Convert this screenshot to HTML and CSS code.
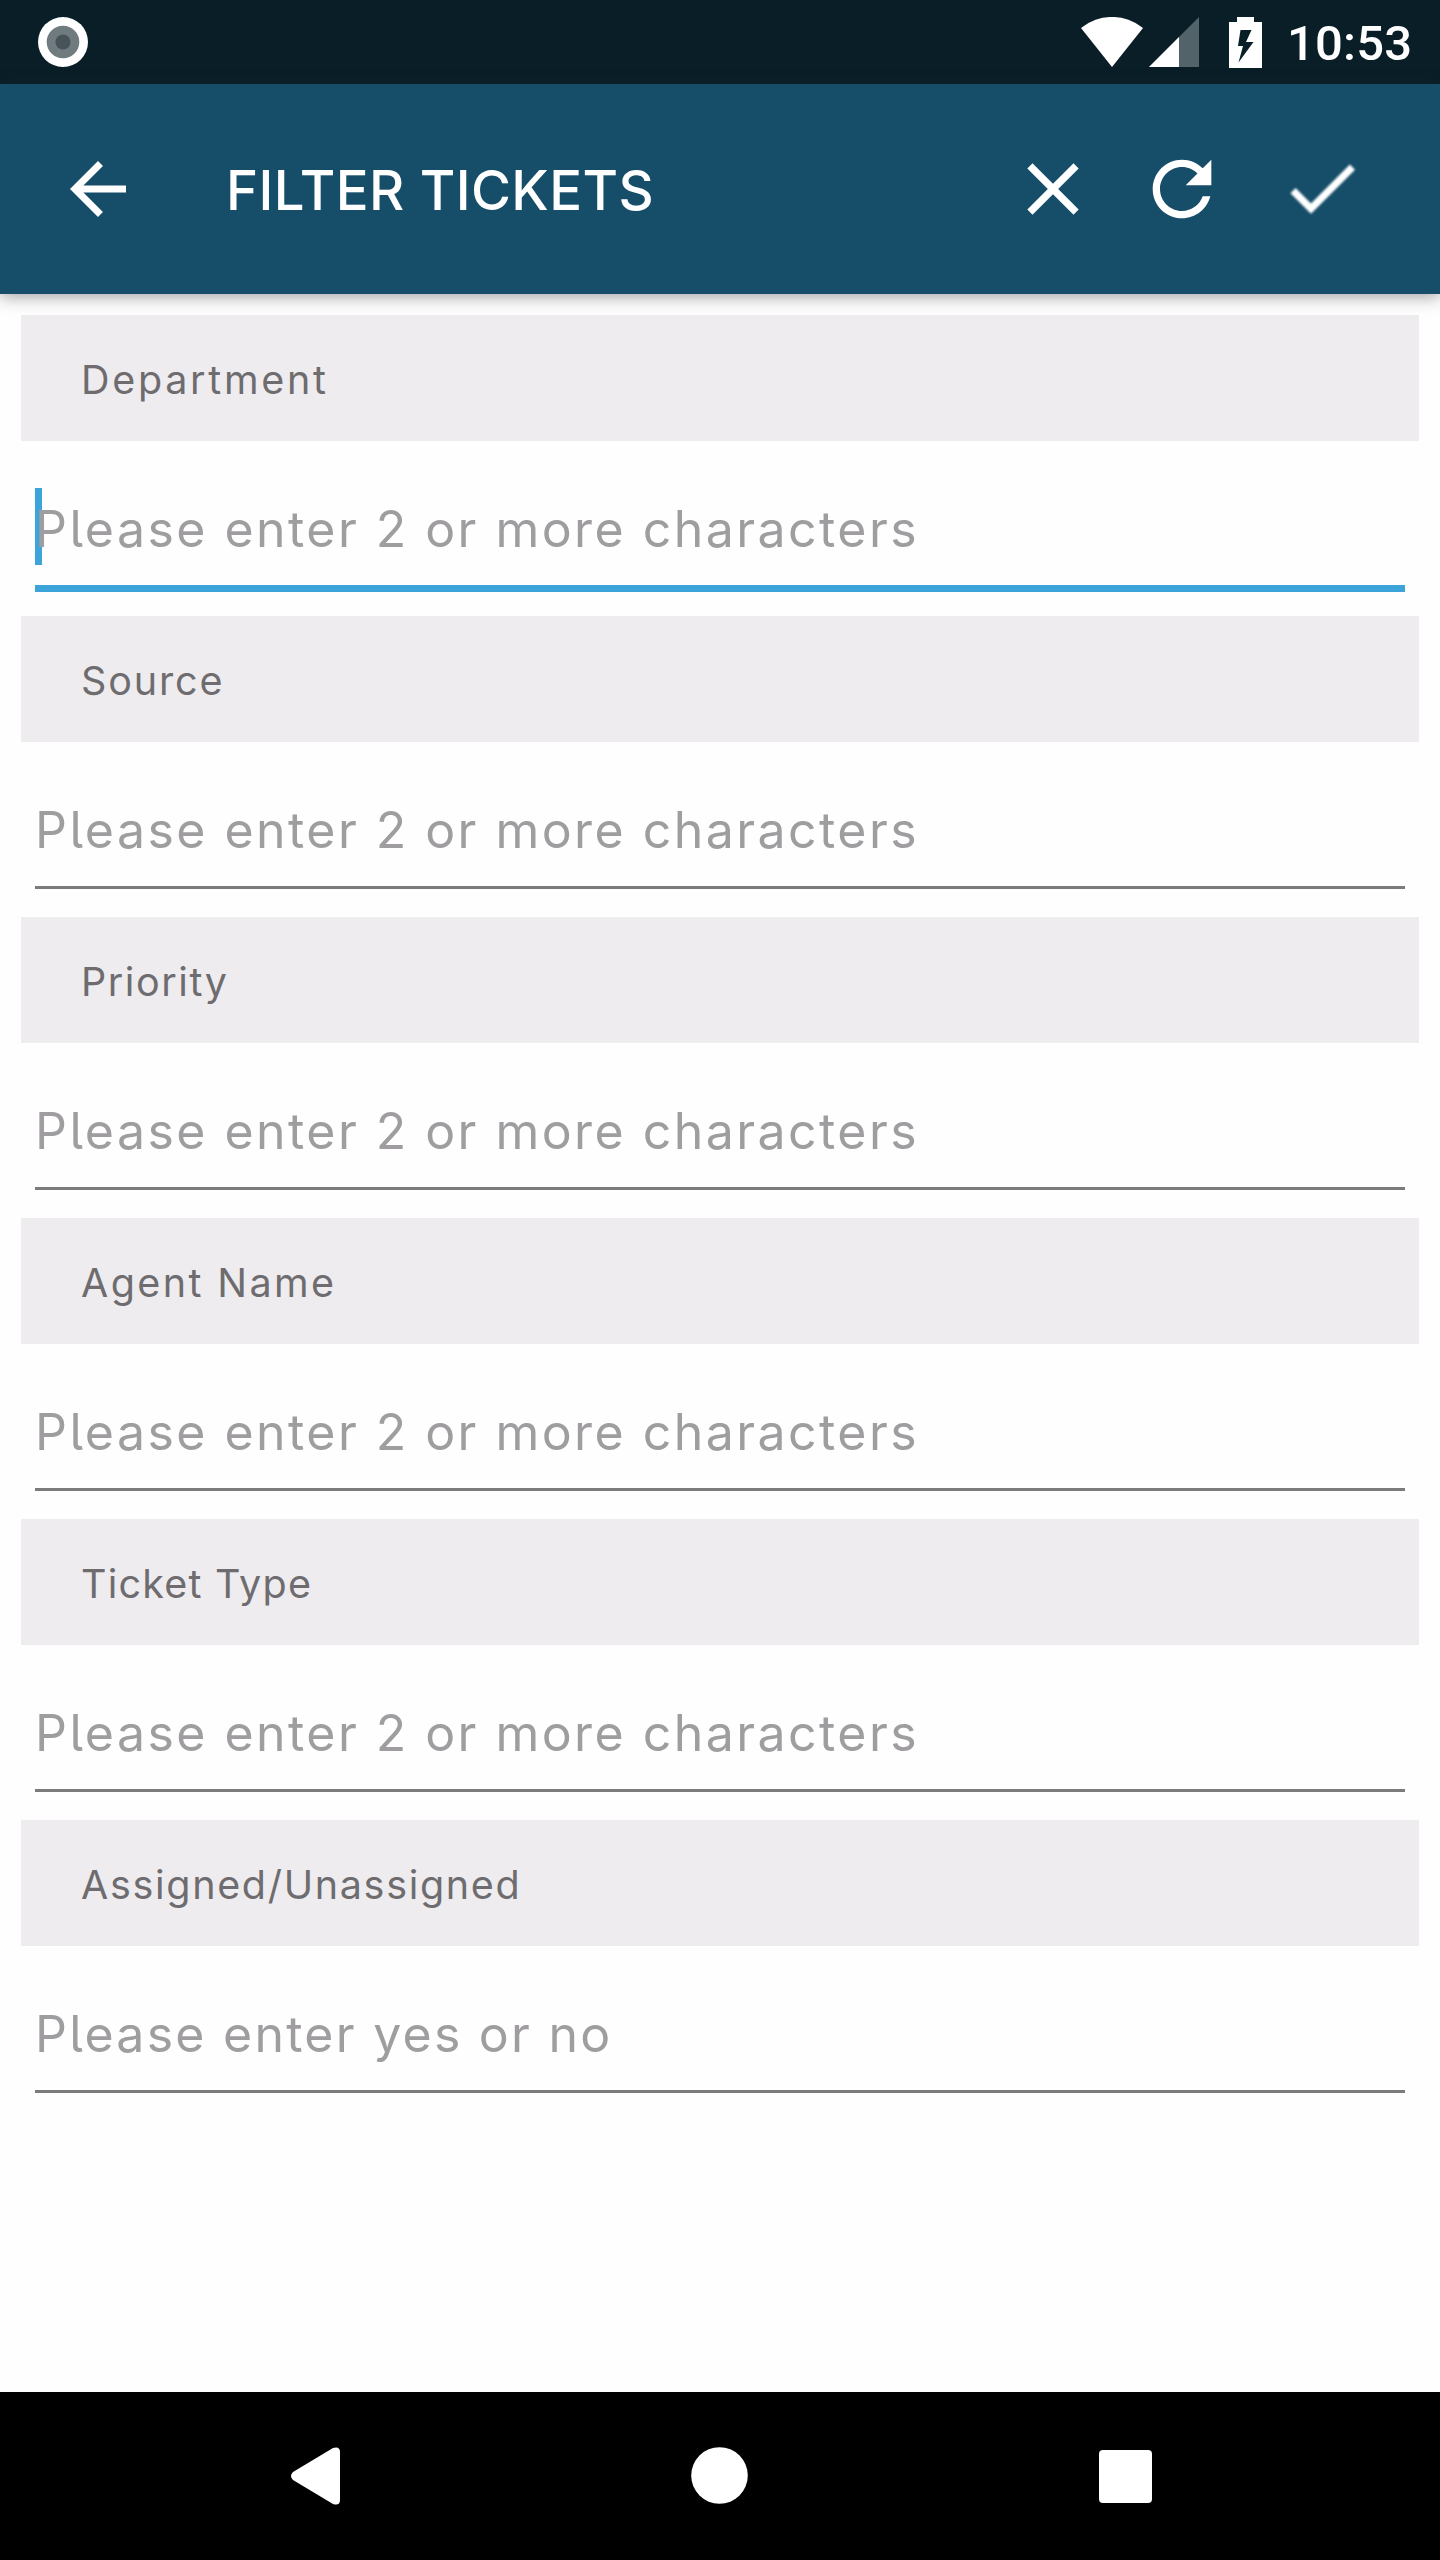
FILE: index.html
```html
<!DOCTYPE html>
<html lang="en">
<head>
<meta charset="utf-8">
<title>Filter Tickets</title>
<link rel="stylesheet" href="styles.css">
</head>
<body>
<div class="screen">
  <header class="status">
    <svg class="record" width="50" height="50" viewBox="0 0 50 50"><circle cx="25" cy="25" r="25" fill="#fff"/><circle cx="25" cy="25" r="16.3" fill="#6f7b7f"/><circle cx="25" cy="25" r="7.6" fill="#46545a"/></svg>
    <div class="status-right">
      <svg class="wifi" width="62" height="50" viewBox="0 0 62 50"><path d="M0 11A49 49 0 0 1 62 11L31 50Z" fill="#fff"/></svg>
      <svg class="signal" width="50" height="50" viewBox="0 0 50 50"><path d="M0 50L50 0V50Z" fill="#53636a"/><path d="M0 50L30 20V50Z" fill="#fff"/></svg>
      <svg class="battery" width="33" height="51" viewBox="0 0 33 51"><path fill-rule="evenodd" d="M8 0H25V5H33V51H0V5H8ZM11.5 13L9 29H14L9.5 45.500L24.500 25H17L22.500 13Z" fill="#fff"/></svg>
      <span class="clock">10:53</span>
    </div>
  </header>
  <div class="toolbar">
    <svg class="back" width="84" height="84" viewBox="0 0 24 24"><path d="M20 11H7.830l5.590-5.590L12 4l-8 8 8 8 1.410-1.410L7.830 13H20v-2z"/></svg>
    <h1 class="title">FILTER TICKETS</h1>
    <svg class="close" width="88" height="88" viewBox="0 0 24 24"><path d="M19 6.410L17.590 5 12 10.590 6.410 5 5 6.410 10.590 12 5 17.590 6.410 19 12 13.410 17.590 19 19 17.590 13.410 12z"/></svg>
    <svg class="refresh" width="88" height="88" viewBox="0 0 24 24"><path d="M17.650 6.350C16.200 4.900 14.210 4 12 4c-4.420 0-7.990 3.580-7.990 8s3.570 8 7.990 8c3.730 0 6.840-2.550 7.730-6h-2.080c-.820 2.330-3.040 4-5.650 4-3.310 0-6-2.690-6-6s2.690-6 6-6c1.660 0 3.140.690 4.220 1.780L13 11h7V4l-2.350 2.350z"/></svg>
    <svg class="done" width="88" height="88" viewBox="0 0 24 24"><path d="M9 16.200L4.800 12l-1.400 1.400L9 19 21 7l-1.400-1.400L9 16.200z"/></svg>
  </div>
  <main class="form">
    <section class="group">
      <h2 class="label department">Department</h2>
      <div class="field focused"><span class="caret"></span>Please enter 2 or more characters</div>
    </section>
    <section class="group">
      <h2 class="label source">Source</h2>
      <div class="field">Please enter 2 or more characters</div>
    </section>
    <section class="group">
      <h2 class="label priority">Priority</h2>
      <div class="field">Please enter 2 or more characters</div>
    </section>
    <section class="group">
      <h2 class="label agent">Agent Name</h2>
      <div class="field">Please enter 2 or more characters</div>
    </section>
    <section class="group">
      <h2 class="label type">Ticket Type</h2>
      <div class="field">Please enter 2 or more characters</div>
    </section>
    <section class="group">
      <h2 class="label assigned">Assigned/Unassigned</h2>
      <div class="field yesno">Please enter yes or no</div>
    </section>
  </main>
  <nav class="navbar">
    <svg width="49" height="58" viewBox="0 0 49 58"><path d="M2 25L42 1Q49-1 49 5V53Q49 59 42 57L2 33Q-2 29 2 25Z" fill="#fff"/></svg>
    <svg class="home" width="57" height="57" viewBox="0 0 57 57"><circle cx="28.500" cy="28.500" r="28.300" fill="#fff"/></svg>
    <svg width="53" height="53" viewBox="0 0 53 53"><rect width="53" height="53" rx="4" fill="#fff"/></svg>
  </nav>
</div>
</body>
</html>
```

FILE: styles.css
```css
* { box-sizing: border-box; }
body { margin: 0; background: #fefefe; font-family: Inter, "Noto Sans", sans-serif; }
svg { display: block; flex: none; }
.screen { width: 1440px; height: 2560px; display: flex; flex-direction: column; overflow: hidden; }

.status { height: 84px; flex: none; background: #091e27; display: flex; justify-content: space-between; padding: 0 30px 0 38px; align-items: center; }
.status-right { display: flex; align-items: center; height: 84px; }
.signal { margin-left: 6px; }
.battery { margin-left: 30px; }
.clock { width: 123px; margin-left: 25px; padding-top: 4px; font: 500 49px/84px Roboto, sans-serif; letter-spacing: 0.2px; color: #fff; white-space: nowrap; }

.toolbar { height: 210px; flex: none; background: #164d69; display: flex; align-items: center; padding: 0 74px 0 56px; box-shadow: 0 2px 16px rgba(40, 30, 40, 0.45); position: relative; fill: #fff; }
.title { flex: 1; margin: 0 0 0 86px; padding-top: 1px; font-size: 54.5px; font-weight: 550; line-height: 84px; letter-spacing: 0.4px; color: #fff; white-space: nowrap; }
.refresh { margin-left: 41px; }
.done { margin: 0 0 3px 52px; filter: blur(0.8px); }

.form { flex: 1; padding: 21px 21px 0; }
.group { height: 301px; }
.label { margin: 0; height: 126px; padding: 2px 0 0 60px; background: #eeecef; color: #6e6c6f; font-size: 39.5px; font-weight: 400; line-height: 126px; white-space: nowrap; }
.department { letter-spacing: 2.7px; }
.source { letter-spacing: 1.85px; }
.priority { letter-spacing: 1.57px; }
.agent { letter-spacing: 2.4px; }
.type { letter-spacing: 1.2px; }
.assigned { letter-spacing: 1.68px; }
.field { position: relative; height: 147px; margin: 0 14px; padding: 47px 0 0 0; border-bottom: 3px solid #7c7a7d; color: #9f9da0; font-size: 50px; line-height: 82px; letter-spacing: 2.45px; font-feature-settings: "cv05"; white-space: nowrap; }
.field.focused { height: 151px; border-bottom: 7px solid #3ca4d8; }
.field.yesno { letter-spacing: 2.25px; }
.caret { position: absolute; z-index: -1; left: 0; top: 47px; width: 7px; height: 77px; background: #3ca4d8; }

.navbar { height: 168px; flex: none; background: #000; display: flex; justify-content: space-between; align-items: center; padding: 0 288px 0 291px; }
.home { margin-bottom: 2px; }
```
